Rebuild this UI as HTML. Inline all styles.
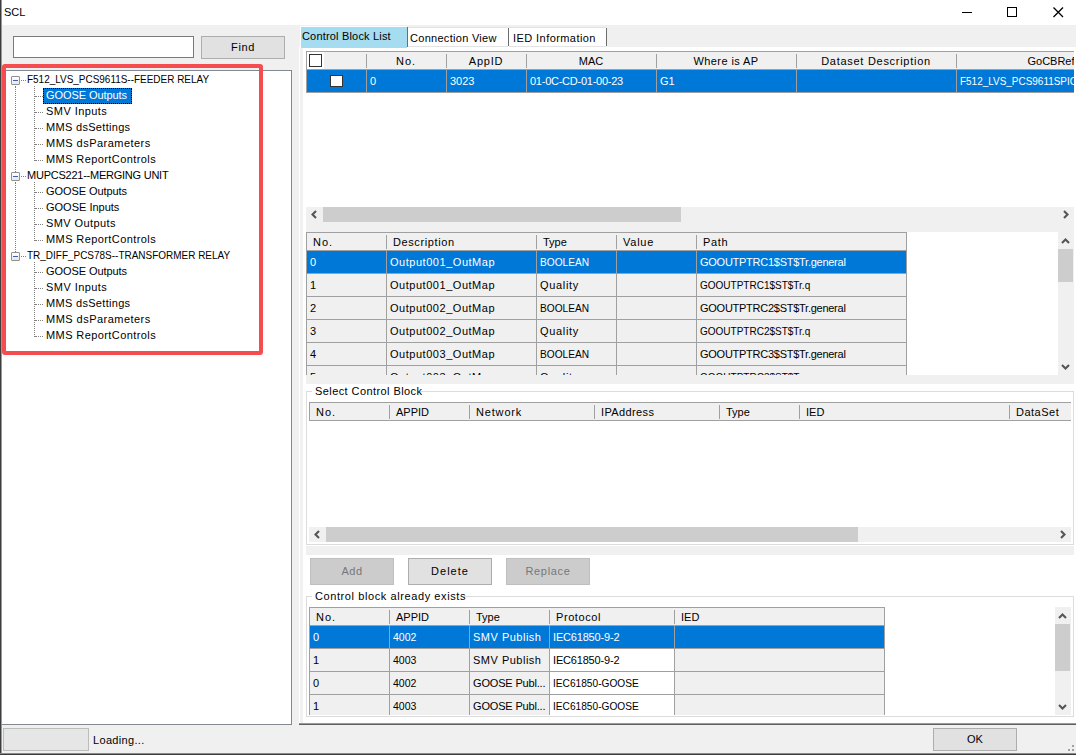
<!DOCTYPE html><html><head><meta charset="utf-8"><style>
html,body{margin:0;padding:0;}
body{width:1076px;height:755px;position:relative;overflow:hidden;background:#f0f0f0;font-family:"Liberation Sans", sans-serif;font-size:11px;color:#000;}
div{position:absolute;box-sizing:border-box;}
.t{white-space:nowrap;line-height:14px;height:14px;}
</style></head><body><div style="left:0px;top:0px;width:1076px;height:25px;background:#fff"></div><div class="t" style="left:4px;top:5px;letter-spacing:0.0px;">SCL</div><div style="left:962px;top:12px;width:10px;height:1px;background:#000"></div><div style="left:1007px;top:7px;width:10px;height:10px;border:1px solid #000"></div><svg style="position:absolute;left:1053px;top:7px" width="11" height="11" viewBox="0 0 11 11"><path d="M0.5 0.5L10 10M10 0.5L0.5 10" stroke="#000" stroke-width="1.3"/></svg><div style="left:13px;top:36px;width:181px;height:22px;background:#fff;border:1px solid #7a7a7a"></div><div style="left:201px;top:36px;width:84px;height:23px;background:#e1e1e1;border:1px solid #adadad"></div><div class="t" style="left:231px;top:40px;letter-spacing:0.67px;">Find</div><div style="left:1px;top:70px;width:291px;height:655px;background:#fff;border:1px solid #828790;border-left:none"></div><div style="left:11px;top:76px;width:9px;height:9px;background:linear-gradient(#fff,#e8e8e8);border:1px solid #919191;border-radius:1px"></div><div style="left:13px;top:80px;width:5px;height:1px;background:#3c5fb5"></div><div style="left:21px;top:80px;width:5px;height:1px;border-top:1px dotted #808080"></div><div class="t" style="left:27px;top:72px;transform:scaleX(0.9050);transform-origin:0 0;">F512_LVS_PCS9611S--FEEDER RELAY</div><div style="left:35px;top:96px;width:8px;height:1px;border-top:1px dotted #808080"></div><div style="left:43px;top:88px;width:89px;height:16px;background:#0078d7;border:1px dotted #000"></div><div class="t" style="left:46px;top:88px;letter-spacing:-0.08px;color:#fff">GOOSE Outputs</div><div style="left:35px;top:112px;width:8px;height:1px;border-top:1px dotted #808080"></div><div class="t" style="left:46px;top:104px;letter-spacing:0.44px;">SMV Inputs</div><div style="left:35px;top:128px;width:8px;height:1px;border-top:1px dotted #808080"></div><div class="t" style="left:46px;top:120px;letter-spacing:0.31px;">MMS dsSettings</div><div style="left:35px;top:144px;width:8px;height:1px;border-top:1px dotted #808080"></div><div class="t" style="left:46px;top:136px;letter-spacing:0.47px;">MMS dsParameters</div><div style="left:35px;top:160px;width:8px;height:1px;border-top:1px dotted #808080"></div><div class="t" style="left:46px;top:152px;letter-spacing:0.41px;">MMS ReportControls</div><div style="left:11px;top:172px;width:9px;height:9px;background:linear-gradient(#fff,#e8e8e8);border:1px solid #919191;border-radius:1px"></div><div style="left:13px;top:176px;width:5px;height:1px;background:#3c5fb5"></div><div style="left:21px;top:176px;width:5px;height:1px;border-top:1px dotted #808080"></div><div class="t" style="left:27px;top:168px;letter-spacing:-0.24px;">MUPCS221--MERGING UNIT</div><div style="left:35px;top:192px;width:8px;height:1px;border-top:1px dotted #808080"></div><div class="t" style="left:46px;top:184px;letter-spacing:-0.08px;">GOOSE Outputs</div><div style="left:35px;top:208px;width:8px;height:1px;border-top:1px dotted #808080"></div><div class="t" style="left:46px;top:200px;letter-spacing:0.0px;">GOOSE Inputs</div><div style="left:35px;top:224px;width:8px;height:1px;border-top:1px dotted #808080"></div><div class="t" style="left:46px;top:216px;letter-spacing:0.4px;">SMV Outputs</div><div style="left:35px;top:240px;width:8px;height:1px;border-top:1px dotted #808080"></div><div class="t" style="left:46px;top:232px;letter-spacing:0.41px;">MMS ReportControls</div><div style="left:11px;top:252px;width:9px;height:9px;background:linear-gradient(#fff,#e8e8e8);border:1px solid #919191;border-radius:1px"></div><div style="left:13px;top:256px;width:5px;height:1px;background:#3c5fb5"></div><div style="left:21px;top:256px;width:5px;height:1px;border-top:1px dotted #808080"></div><div class="t" style="left:27px;top:248px;transform:scaleX(0.9062);transform-origin:0 0;">TR_DIFF_PCS78S--TRANSFORMER RELAY</div><div style="left:35px;top:272px;width:8px;height:1px;border-top:1px dotted #808080"></div><div class="t" style="left:46px;top:264px;letter-spacing:-0.08px;">GOOSE Outputs</div><div style="left:35px;top:288px;width:8px;height:1px;border-top:1px dotted #808080"></div><div class="t" style="left:46px;top:280px;letter-spacing:0.44px;">SMV Inputs</div><div style="left:35px;top:304px;width:8px;height:1px;border-top:1px dotted #808080"></div><div class="t" style="left:46px;top:296px;letter-spacing:0.31px;">MMS dsSettings</div><div style="left:35px;top:320px;width:8px;height:1px;border-top:1px dotted #808080"></div><div class="t" style="left:46px;top:312px;letter-spacing:0.47px;">MMS dsParameters</div><div style="left:35px;top:336px;width:8px;height:1px;border-top:1px dotted #808080"></div><div class="t" style="left:46px;top:328px;letter-spacing:0.41px;">MMS ReportControls</div><div style="left:34px;top:86px;width:1px;height:75px;border-left:1px dotted #808080"></div><div style="left:34px;top:182px;width:1px;height:59px;border-left:1px dotted #808080"></div><div style="left:34px;top:262px;width:1px;height:75px;border-left:1px dotted #808080"></div><div style="left:15px;top:86px;width:1px;height:86px;border-left:1px dotted #808080"></div><div style="left:15px;top:182px;width:1px;height:70px;border-left:1px dotted #808080"></div><div style="left:2px;top:64px;width:261px;height:291px;border:4px solid #f44c4f;border-radius:3px"></div><div style="left:3px;top:728px;width:86px;height:23px;background:#e6e6e6;border:1px solid #bcbcbc"></div><div class="t" style="left:93px;top:733px;letter-spacing:0.33px;">Loading...</div><div style="left:0px;top:0px;width:1px;height:755px;background:#3c3c3c"></div><div style="left:1px;top:0px;width:1px;height:755px;background:#9a9a9a"></div><div style="left:0px;top:753px;width:1076px;height:1px;background:#8a8a8a"></div><div style="left:0px;top:754px;width:1076px;height:1px;background:#3c3c3c"></div><div style="left:299px;top:47px;width:777px;height:678px;background:#fff;border-left:1px solid #fff"></div><div style="left:300px;top:47px;width:3px;height:677px;background:#f0f0f0"></div><div style="left:299px;top:723px;width:777px;height:1px;background:#9a9a9a"></div><div style="left:299px;top:724px;width:777px;height:1px;background:#606060"></div><div style="left:300px;top:26px;width:107px;height:22px;background:#fff"></div><div style="left:301px;top:27px;width:106px;height:21px;background:#a6dcf0"></div><div style="left:407px;top:27px;width:1px;height:20px;background:#6d6d6d"></div><div class="t" style="left:302px;top:29px;letter-spacing:0.18px;">Control Block List</div><div style="left:408px;top:27px;width:100px;height:20px;background:#fff;border-top:1px solid #e3e3e3;border-bottom:1px solid #e3e3e3"></div><div style="left:408px;top:28px;width:99px;height:1px;background:#fff"></div><div style="left:508px;top:28px;width:1px;height:18px;background:#6d6d6d"></div><div class="t" style="left:410px;top:31px;letter-spacing:0.29px;">Connection View</div><div style="left:509px;top:27px;width:97px;height:20px;background:#fff;border-top:1px solid #e3e3e3;border-bottom:1px solid #e3e3e3"></div><div style="left:606px;top:28px;width:1px;height:18px;background:#6d6d6d"></div><div class="t" style="left:513px;top:31px;letter-spacing:0.43px;">IED Information</div><div style="left:306px;top:51px;width:768px;height:42px;overflow:hidden"><div style="left:0;top:0;width:841px;height:19px;background:#f0f0f0;border-top:1px solid #a0a0a0;border-bottom:1px solid #a0a0a0"></div><div style="left:60px;top:3px;width:1px;height:14px;background:#a0a0a0"></div><div style="left:140px;top:3px;width:1px;height:14px;background:#a0a0a0"></div><div style="left:220px;top:3px;width:1px;height:14px;background:#a0a0a0"></div><div style="left:350px;top:3px;width:1px;height:14px;background:#a0a0a0"></div><div style="left:490px;top:3px;width:1px;height:14px;background:#a0a0a0"></div><div style="left:650px;top:3px;width:1px;height:14px;background:#a0a0a0"></div><div style="left:0;top:19px;width:841px;height:23px;background:#0078d7;border-bottom:1px solid #a0a0a0"></div><div class="t" style="left:64px;top:23px;color:#fff;">0</div><div class="t" style="left:144px;top:23px;color:#fff;letter-spacing:0.0px;">3023</div><div class="t" style="left:224px;top:23px;color:#fff;letter-spacing:-0.25px;">01-0C-CD-01-00-23</div><div class="t" style="left:354px;top:23px;color:#fff;">G1</div><div class="t" style="left:494px;top:23px;color:#fff;"></div><div class="t" style="left:654px;top:23px;color:#fff;transform:scaleX(0.9050);transform-origin:0 0;">F512_LVS_PCS9611SPIC/LLN0$GO$gocb0</div><div style="left:60px;top:19px;width:1px;height:23px;background:#a0a0a0"></div><div style="left:140px;top:19px;width:1px;height:23px;background:#a0a0a0"></div><div style="left:220px;top:19px;width:1px;height:23px;background:#a0a0a0"></div><div style="left:350px;top:19px;width:1px;height:23px;background:#a0a0a0"></div><div style="left:490px;top:19px;width:1px;height:23px;background:#a0a0a0"></div><div style="left:650px;top:19px;width:1px;height:23px;background:#a0a0a0"></div><div style="left:0;top:0;width:1px;height:42px;background:#a0a0a0"></div><div style="left:840px;top:0;width:1px;height:42px;background:#a0a0a0"></div><div class="t" style="left:60px;width:80px;text-align:center;top:3px;letter-spacing:1.0px">No.</div><div class="t" style="left:140px;width:80px;text-align:center;top:3px;letter-spacing:0.75px">AppID</div><div class="t" style="left:220px;width:130px;text-align:center;top:3px;letter-spacing:0.0px">MAC</div><div class="t" style="left:350px;width:140px;text-align:center;top:3px;letter-spacing:0.4px">Where is AP</div><div class="t" style="left:490px;width:160px;text-align:center;top:3px;letter-spacing:0.72px">Dataset Description</div><div class="t" style="left:650px;width:190px;text-align:center;top:3px;letter-spacing:0px">GoCBRef</div></div><div style="left:307px;top:52px;width:17px;height:17px;background:#fff"></div><div style="left:309px;top:54px;width:13px;height:13px;background:#fff;border:1px solid #333"></div><div style="left:330px;top:75px;width:13px;height:12px;background:#fff;border:1px solid #333"></div><div style="left:306px;top:207px;width:768px;height:25px;background:#f0f0f0"></div><div style="left:306px;top:207px;width:768px;height:15px;background:#f0f0f0"></div><div style="left:323px;top:207px;width:358px;height:15px;background:#cdcdcd"></div><svg style="position:absolute;left:310px;top:210px" width="8" height="9" viewBox="0 0 8 9"><path d="M6 1L2.5 4.5L6 8" stroke="#555" stroke-width="2.1" fill="none"/></svg><svg style="position:absolute;left:1062px;top:210px" width="8" height="9" viewBox="0 0 8 9"><path d="M2 1L5.5 4.5L2 8" stroke="#555" stroke-width="2.1" fill="none"/></svg><div style="left:306px;top:232px;width:601px;height:143px;overflow:hidden"><div style="left:0;top:0;width:601px;height:19px;background:#f0f0f0;border-top:1px solid #a0a0a0;border-bottom:1px solid #a0a0a0"></div><div style="left:80px;top:3px;width:1px;height:14px;background:#a0a0a0"></div><div style="left:230px;top:3px;width:1px;height:14px;background:#a0a0a0"></div><div style="left:310px;top:3px;width:1px;height:14px;background:#a0a0a0"></div><div style="left:390px;top:3px;width:1px;height:14px;background:#a0a0a0"></div><div style="left:0;top:19px;width:601px;height:23px;background:#0078d7;border-bottom:1px solid #a0a0a0"></div><div class="t" style="left:4px;top:23px;color:#fff;">0</div><div class="t" style="left:84px;top:23px;color:#fff;letter-spacing:0.53px;">Output001_OutMap</div><div class="t" style="left:234px;top:23px;color:#fff;transform:scaleX(0.9231);transform-origin:0 0;">BOOLEAN</div><div class="t" style="left:314px;top:23px;color:#fff;"></div><div class="t" style="left:394px;top:23px;color:#fff;letter-spacing:-0.26px;">GOOUTPTRC1$ST$Tr.general</div><div style="left:80px;top:19px;width:1px;height:23px;background:#a0a0a0"></div><div style="left:230px;top:19px;width:1px;height:23px;background:#a0a0a0"></div><div style="left:310px;top:19px;width:1px;height:23px;background:#a0a0a0"></div><div style="left:390px;top:19px;width:1px;height:23px;background:#a0a0a0"></div><div style="left:0;top:42px;width:601px;height:23px;background:#f0f0f0;border-bottom:1px solid #a0a0a0"></div><div class="t" style="left:4px;top:46px;color:#000;">1</div><div class="t" style="left:84px;top:46px;color:#000;letter-spacing:0.53px;">Output001_OutMap</div><div class="t" style="left:234px;top:46px;color:#000;letter-spacing:0.67px;">Quality</div><div class="t" style="left:314px;top:46px;color:#000;"></div><div class="t" style="left:394px;top:46px;color:#000;transform:scaleX(0.9091);transform-origin:0 0;">GOOUTPTRC1$ST$Tr.q</div><div style="left:80px;top:42px;width:1px;height:23px;background:#a0a0a0"></div><div style="left:230px;top:42px;width:1px;height:23px;background:#a0a0a0"></div><div style="left:310px;top:42px;width:1px;height:23px;background:#a0a0a0"></div><div style="left:390px;top:42px;width:1px;height:23px;background:#a0a0a0"></div><div style="left:0;top:65px;width:601px;height:23px;background:#f0f0f0;border-bottom:1px solid #a0a0a0"></div><div class="t" style="left:4px;top:69px;color:#000;">2</div><div class="t" style="left:84px;top:69px;color:#000;letter-spacing:0.53px;">Output002_OutMap</div><div class="t" style="left:234px;top:69px;color:#000;transform:scaleX(0.9231);transform-origin:0 0;">BOOLEAN</div><div class="t" style="left:314px;top:69px;color:#000;"></div><div class="t" style="left:394px;top:69px;color:#000;letter-spacing:-0.26px;">GOOUTPTRC2$ST$Tr.general</div><div style="left:80px;top:65px;width:1px;height:23px;background:#a0a0a0"></div><div style="left:230px;top:65px;width:1px;height:23px;background:#a0a0a0"></div><div style="left:310px;top:65px;width:1px;height:23px;background:#a0a0a0"></div><div style="left:390px;top:65px;width:1px;height:23px;background:#a0a0a0"></div><div style="left:0;top:88px;width:601px;height:23px;background:#f0f0f0;border-bottom:1px solid #a0a0a0"></div><div class="t" style="left:4px;top:92px;color:#000;">3</div><div class="t" style="left:84px;top:92px;color:#000;letter-spacing:0.53px;">Output002_OutMap</div><div class="t" style="left:234px;top:92px;color:#000;letter-spacing:0.67px;">Quality</div><div class="t" style="left:314px;top:92px;color:#000;"></div><div class="t" style="left:394px;top:92px;color:#000;transform:scaleX(0.9091);transform-origin:0 0;">GOOUTPTRC2$ST$Tr.q</div><div style="left:80px;top:88px;width:1px;height:23px;background:#a0a0a0"></div><div style="left:230px;top:88px;width:1px;height:23px;background:#a0a0a0"></div><div style="left:310px;top:88px;width:1px;height:23px;background:#a0a0a0"></div><div style="left:390px;top:88px;width:1px;height:23px;background:#a0a0a0"></div><div style="left:0;top:111px;width:601px;height:23px;background:#f0f0f0;border-bottom:1px solid #a0a0a0"></div><div class="t" style="left:4px;top:115px;color:#000;">4</div><div class="t" style="left:84px;top:115px;color:#000;letter-spacing:0.53px;">Output003_OutMap</div><div class="t" style="left:234px;top:115px;color:#000;transform:scaleX(0.9231);transform-origin:0 0;">BOOLEAN</div><div class="t" style="left:314px;top:115px;color:#000;"></div><div class="t" style="left:394px;top:115px;color:#000;letter-spacing:-0.26px;">GOOUTPTRC3$ST$Tr.general</div><div style="left:80px;top:111px;width:1px;height:23px;background:#a0a0a0"></div><div style="left:230px;top:111px;width:1px;height:23px;background:#a0a0a0"></div><div style="left:310px;top:111px;width:1px;height:23px;background:#a0a0a0"></div><div style="left:390px;top:111px;width:1px;height:23px;background:#a0a0a0"></div><div style="left:0;top:134px;width:601px;height:23px;background:#f0f0f0;border-bottom:1px solid #a0a0a0"></div><div class="t" style="left:4px;top:138px;color:#000;">5</div><div class="t" style="left:84px;top:138px;color:#000;letter-spacing:0.53px;">Output003_OutMap</div><div class="t" style="left:234px;top:138px;color:#000;letter-spacing:0.67px;">Quality</div><div class="t" style="left:314px;top:138px;color:#000;"></div><div class="t" style="left:394px;top:138px;color:#000;transform:scaleX(0.9091);transform-origin:0 0;">GOOUTPTRC3$ST$Tr.q</div><div style="left:80px;top:134px;width:1px;height:23px;background:#a0a0a0"></div><div style="left:230px;top:134px;width:1px;height:23px;background:#a0a0a0"></div><div style="left:310px;top:134px;width:1px;height:23px;background:#a0a0a0"></div><div style="left:390px;top:134px;width:1px;height:23px;background:#a0a0a0"></div><div style="left:0;top:0;width:1px;height:157px;background:#a0a0a0"></div><div style="left:600px;top:0;width:1px;height:157px;background:#a0a0a0"></div><div class="t" style="left:7px;top:3px;letter-spacing:1.0px">No.</div><div class="t" style="left:87px;top:3px;letter-spacing:0.6px">Description</div><div class="t" style="left:237px;top:3px;letter-spacing:0.0px">Type</div><div class="t" style="left:317px;top:3px;letter-spacing:0.75px">Value</div><div class="t" style="left:397px;top:3px;letter-spacing:0.67px">Path</div></div><div style="left:1058px;top:232px;width:16px;height:143px;background:#f0f0f0"></div><div style="left:1058px;top:249px;width:15px;height:33px;background:#cdcdcd"></div><svg style="position:absolute;left:1061px;top:237px" width="9" height="8" viewBox="0 0 9 8"><path d="M1 6L4.5 2.5L8 6" stroke="#555" stroke-width="2.1" fill="none"/></svg><svg style="position:absolute;left:1061px;top:363px" width="9" height="8" viewBox="0 0 9 8"><path d="M1 2L4.5 5.5L8 2" stroke="#555" stroke-width="2.1" fill="none"/></svg><div style="left:306px;top:375px;width:768px;height:9px;background:#f0f0f0"></div><div style="left:306px;top:391px;width:768px;height:154px;border:1px solid #dcdcdc"></div><div style="left:312px;top:385px;width:108px;height:12px;background:#fff"></div><div class="t" style="left:315px;top:384px;letter-spacing:0.42px;">Select Control Block</div><div style="left:309px;top:402px;width:762px;height:19px;overflow:hidden"><div style="left:0;top:0;width:872px;height:19px;background:#f0f0f0;border-top:1px solid #a0a0a0;border-bottom:1px solid #a0a0a0"></div><div style="left:80px;top:3px;width:1px;height:14px;background:#a0a0a0"></div><div style="left:160px;top:3px;width:1px;height:14px;background:#a0a0a0"></div><div style="left:285px;top:3px;width:1px;height:14px;background:#a0a0a0"></div><div style="left:410px;top:3px;width:1px;height:14px;background:#a0a0a0"></div><div style="left:490px;top:3px;width:1px;height:14px;background:#a0a0a0"></div><div style="left:700px;top:3px;width:1px;height:14px;background:#a0a0a0"></div><div style="left:0;top:0;width:1px;height:19px;background:#a0a0a0"></div><div style="left:871px;top:0;width:1px;height:19px;background:#a0a0a0"></div><div class="t" style="left:7px;top:3px;letter-spacing:1.0px">No.</div><div class="t" style="left:87px;top:3px;letter-spacing:0px">APPID</div><div class="t" style="left:167px;top:3px;letter-spacing:0.83px">Network</div><div class="t" style="left:292px;top:3px;letter-spacing:0.38px">IPAddress</div><div class="t" style="left:417px;top:3px;letter-spacing:0.0px">Type</div><div class="t" style="left:497px;top:3px;letter-spacing:0.0px">IED</div><div class="t" style="left:707px;top:3px;letter-spacing:0.5px">DataSet</div></div><div style="left:309px;top:421px;width:1px;height:1px;"></div><div style="left:309px;top:527px;width:762px;height:15px;background:#f0f0f0"></div><div style="left:326px;top:527px;width:532px;height:15px;background:#cdcdcd"></div><svg style="position:absolute;left:313px;top:530px" width="8" height="9" viewBox="0 0 8 9"><path d="M6 1L2.5 4.5L6 8" stroke="#555" stroke-width="2.1" fill="none"/></svg><svg style="position:absolute;left:1059px;top:530px" width="8" height="9" viewBox="0 0 8 9"><path d="M2 1L5.5 4.5L2 8" stroke="#555" stroke-width="2.1" fill="none"/></svg><div style="left:306px;top:546px;width:768px;height:9px;background:#f0f0f0"></div><div style="left:310px;top:558px;width:84px;height:27px;background:#cccccc;border:1px solid #bfbfbf"></div><div class="t" style="left:310px;width:84px;text-align:center;top:564px;color:#777;letter-spacing:0.5px">Add</div><div style="left:408px;top:558px;width:84px;height:27px;background:#e1e1e1;border:1px solid #adadad"></div><div class="t" style="left:408px;width:84px;text-align:center;top:564px;letter-spacing:1.0px">Delete</div><div style="left:506px;top:558px;width:84px;height:27px;background:#cccccc;border:1px solid #bfbfbf"></div><div class="t" style="left:506px;width:84px;text-align:center;top:564px;color:#777;letter-spacing:0.67px">Replace</div><div style="left:306px;top:596px;width:768px;height:121px;border:1px solid #dcdcdc"></div><div style="left:312px;top:590px;width:152px;height:12px;background:#fff"></div><div class="t" style="left:315px;top:589px;letter-spacing:0.59px;">Control block already exists</div><div style="left:309px;top:607px;width:576px;height:108px;overflow:hidden"><div style="left:0;top:0;width:576px;height:19px;background:#f0f0f0;border-top:1px solid #a0a0a0;border-bottom:1px solid #a0a0a0"></div><div style="left:80px;top:3px;width:1px;height:14px;background:#a0a0a0"></div><div style="left:160px;top:3px;width:1px;height:14px;background:#a0a0a0"></div><div style="left:240px;top:3px;width:1px;height:14px;background:#a0a0a0"></div><div style="left:365px;top:3px;width:1px;height:14px;background:#a0a0a0"></div><div style="left:0;top:19px;width:576px;height:23px;background:#0078d7;border-bottom:1px solid #a0a0a0"></div><div class="t" style="left:4px;top:23px;color:#fff;">0</div><div class="t" style="left:84px;top:23px;color:#fff;transform:scaleX(0.9583);transform-origin:0 0;">4002</div><div class="t" style="left:164px;top:23px;color:#fff;letter-spacing:0.5px;">SMV Publish</div><div class="t" style="left:244px;top:23px;color:#fff;letter-spacing:-0.18px;">IEC61850-9-2</div><div class="t" style="left:369px;top:23px;color:#fff;"></div><div style="left:80px;top:19px;width:1px;height:23px;background:#a0a0a0"></div><div style="left:160px;top:19px;width:1px;height:23px;background:#a0a0a0"></div><div style="left:240px;top:19px;width:1px;height:23px;background:#a0a0a0"></div><div style="left:365px;top:19px;width:1px;height:23px;background:#a0a0a0"></div><div style="left:0;top:42px;width:576px;height:23px;background:#f0f0f0;border-bottom:1px solid #a0a0a0"></div><div style="left:241px;top:42px;width:124px;height:22px;background:#fff"></div><div class="t" style="left:4px;top:46px;color:#000;">1</div><div class="t" style="left:84px;top:46px;color:#000;transform:scaleX(0.9583);transform-origin:0 0;">4003</div><div class="t" style="left:164px;top:46px;color:#000;letter-spacing:0.5px;">SMV Publish</div><div class="t" style="left:244px;top:46px;color:#000;letter-spacing:-0.18px;">IEC61850-9-2</div><div class="t" style="left:369px;top:46px;color:#000;"></div><div style="left:80px;top:42px;width:1px;height:23px;background:#a0a0a0"></div><div style="left:160px;top:42px;width:1px;height:23px;background:#a0a0a0"></div><div style="left:240px;top:42px;width:1px;height:23px;background:#a0a0a0"></div><div style="left:365px;top:42px;width:1px;height:23px;background:#a0a0a0"></div><div style="left:0;top:65px;width:576px;height:23px;background:#f0f0f0;border-bottom:1px solid #a0a0a0"></div><div style="left:241px;top:65px;width:124px;height:22px;background:#fff"></div><div class="t" style="left:4px;top:69px;color:#000;">0</div><div class="t" style="left:84px;top:69px;color:#000;transform:scaleX(0.9583);transform-origin:0 0;">4002</div><div class="t" style="left:164px;top:69px;color:#000;letter-spacing:-0.17px;">GOOSE Publ...</div><div class="t" style="left:244px;top:69px;color:#000;transform:scaleX(0.9231);transform-origin:0 0;">IEC61850-GOOSE</div><div class="t" style="left:369px;top:69px;color:#000;"></div><div style="left:80px;top:65px;width:1px;height:23px;background:#a0a0a0"></div><div style="left:160px;top:65px;width:1px;height:23px;background:#a0a0a0"></div><div style="left:240px;top:65px;width:1px;height:23px;background:#a0a0a0"></div><div style="left:365px;top:65px;width:1px;height:23px;background:#a0a0a0"></div><div style="left:0;top:88px;width:576px;height:23px;background:#f0f0f0;border-bottom:1px solid #a0a0a0"></div><div style="left:241px;top:88px;width:124px;height:22px;background:#fff"></div><div class="t" style="left:4px;top:92px;color:#000;">1</div><div class="t" style="left:84px;top:92px;color:#000;transform:scaleX(0.9583);transform-origin:0 0;">4003</div><div class="t" style="left:164px;top:92px;color:#000;letter-spacing:-0.17px;">GOOSE Publ...</div><div class="t" style="left:244px;top:92px;color:#000;transform:scaleX(0.9231);transform-origin:0 0;">IEC61850-GOOSE</div><div class="t" style="left:369px;top:92px;color:#000;"></div><div style="left:80px;top:88px;width:1px;height:23px;background:#a0a0a0"></div><div style="left:160px;top:88px;width:1px;height:23px;background:#a0a0a0"></div><div style="left:240px;top:88px;width:1px;height:23px;background:#a0a0a0"></div><div style="left:365px;top:88px;width:1px;height:23px;background:#a0a0a0"></div><div style="left:0;top:0;width:1px;height:111px;background:#a0a0a0"></div><div style="left:575px;top:0;width:1px;height:111px;background:#a0a0a0"></div><div class="t" style="left:7px;top:3px;letter-spacing:1.0px">No.</div><div class="t" style="left:87px;top:3px;letter-spacing:0px">APPID</div><div class="t" style="left:167px;top:3px;letter-spacing:0.0px">Type</div><div class="t" style="left:247px;top:3px;letter-spacing:0.57px">Protocol</div><div class="t" style="left:372px;top:3px;letter-spacing:0.0px">IED</div></div><div style="left:1055px;top:607px;width:16px;height:108px;background:#f0f0f0"></div><div style="left:1055px;top:624px;width:15px;height:47px;background:#cdcdcd"></div><svg style="position:absolute;left:1058px;top:612px" width="9" height="8" viewBox="0 0 9 8"><path d="M1 6L4.5 2.5L8 6" stroke="#555" stroke-width="2.1" fill="none"/></svg><svg style="position:absolute;left:1058px;top:703px" width="9" height="8" viewBox="0 0 9 8"><path d="M1 2L4.5 5.5L8 2" stroke="#555" stroke-width="2.1" fill="none"/></svg><div style="left:933px;top:728px;width:84px;height:23px;background:#e1e1e1;border:1px solid #adadad"></div><div class="t" style="left:933px;width:84px;text-align:center;top:732px;letter-spacing:0px">OK</div><div style="left:1072px;top:745px;width:2px;height:2px;background:#a0a0a0"></div><div style="left:1072px;top:749px;width:2px;height:2px;background:#a0a0a0"></div><div style="left:1068px;top:749px;width:2px;height:2px;background:#a0a0a0"></div></body></html>
